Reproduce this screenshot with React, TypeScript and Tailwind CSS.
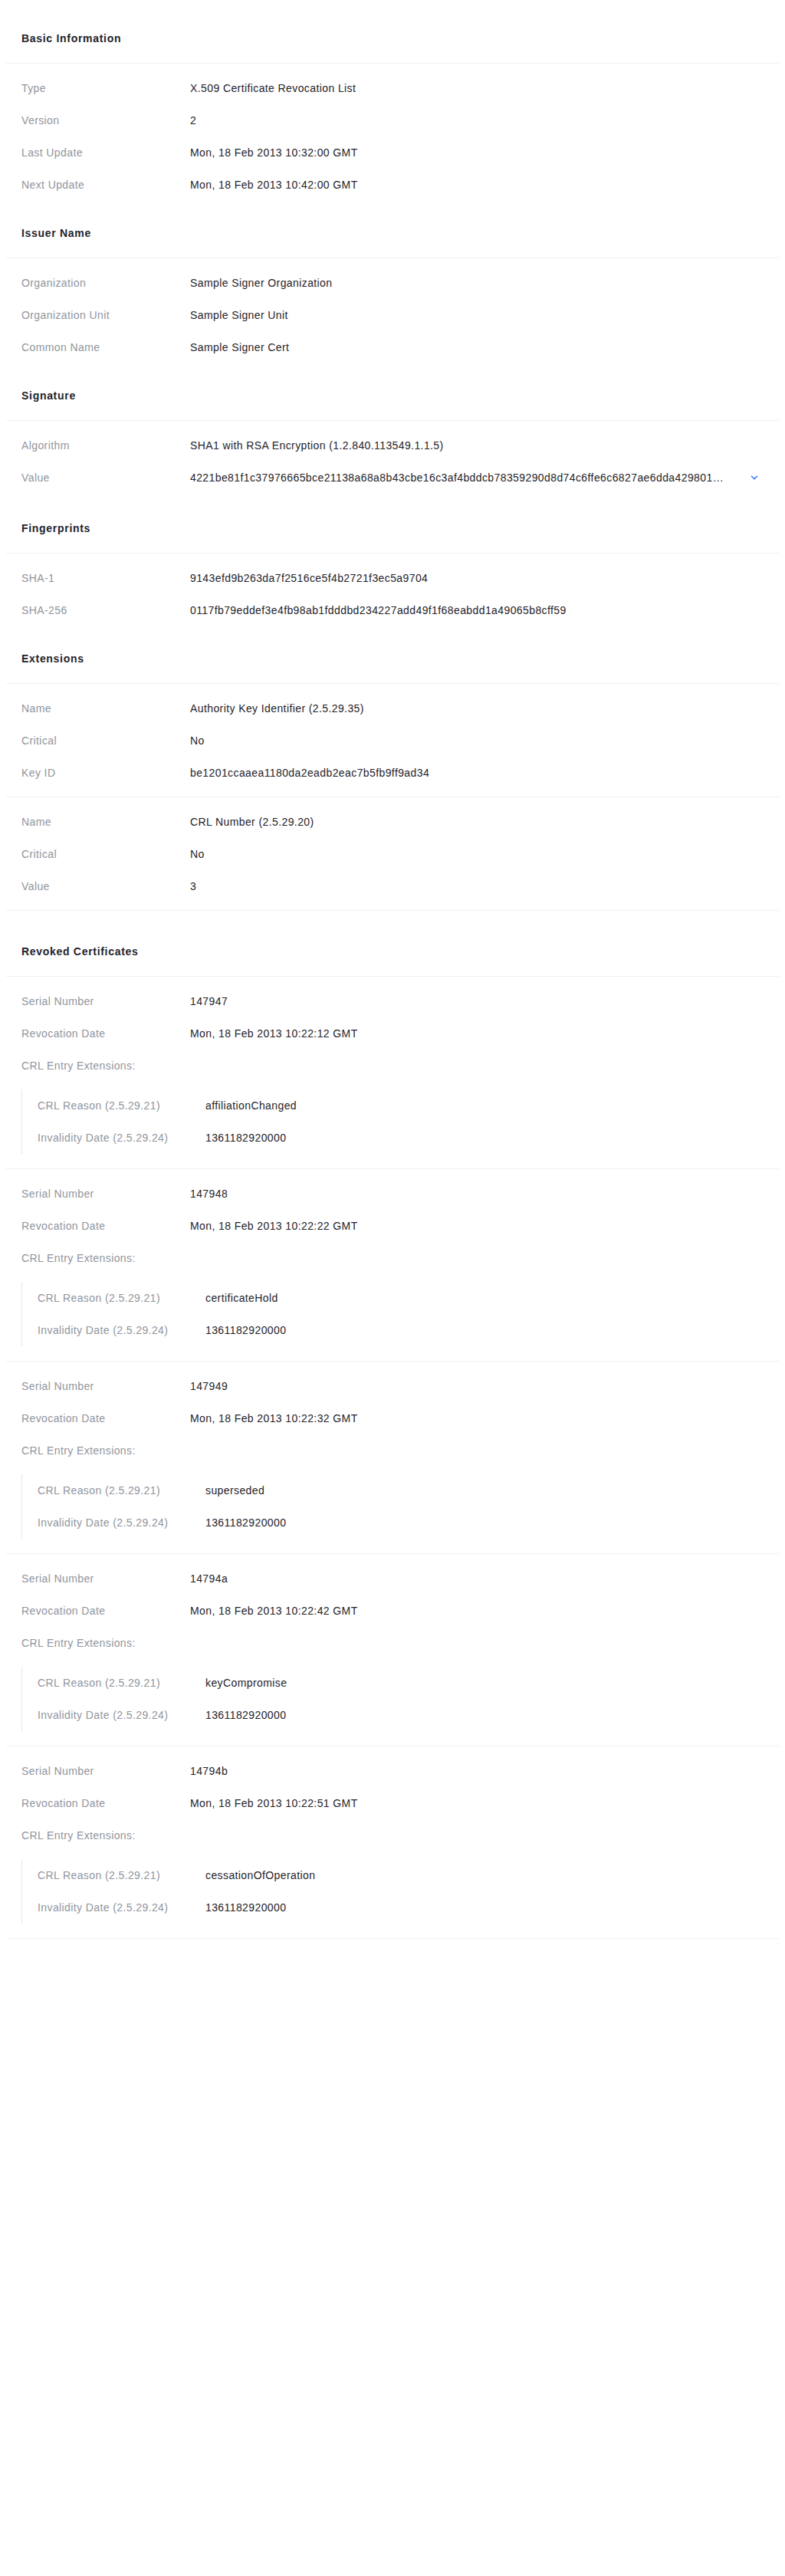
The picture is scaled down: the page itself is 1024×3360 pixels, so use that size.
import { ChevronDown } from "lucide-react";

type Pair = [string, string];

const font = { fontFamily: '"Liberation Sans", Arial, sans-serif' };

const basic: Pair[] = [
  ["Type", "X.509 Certificate Revocation List"],
  ["Version", "2"],
  ["Last Update", "Mon, 18 Feb 2013 10:32:00 GMT"],
  ["Next Update", "Mon, 18 Feb 2013 10:42:00 GMT"],
];

const issuer: Pair[] = [
  ["Organization", "Sample Signer Organization"],
  ["Organization Unit", "Sample Signer Unit"],
  ["Common Name", "Sample Signer Cert"],
];

const fingerprints: Pair[] = [
  ["SHA-1", "9143efd9b263da7f2516ce5f4b2721f3ec5a9704"],
  ["SHA-256", "0117fb79eddef3e4fb98ab1fdddbd234227add49f1f68eabdd1a49065b8cff59"],
];

const extensions: Pair[][] = [
  [
    ["Name", "Authority Key Identifier (2.5.29.35)"],
    ["Critical", "No"],
    ["Key ID", "be1201ccaaea1180da2eadb2eac7b5fb9ff9ad34"],
  ],
  [
    ["Name", "CRL Number (2.5.29.20)"],
    ["Critical", "No"],
    ["Value", "3"],
  ],
];

const revoked = [
  { serial: "147947", date: "Mon, 18 Feb 2013 10:22:12 GMT", reason: "affiliationChanged" },
  { serial: "147948", date: "Mon, 18 Feb 2013 10:22:22 GMT", reason: "certificateHold" },
  { serial: "147949", date: "Mon, 18 Feb 2013 10:22:32 GMT", reason: "superseded" },
  { serial: "14794a", date: "Mon, 18 Feb 2013 10:22:42 GMT", reason: "keyCompromise" },
  { serial: "14794b", date: "Mon, 18 Feb 2013 10:22:51 GMT", reason: "cessationOfOperation" },
];

const signatureValue =
  "4221be81f1c37976665bce21138a68a8b43cbe16c3af4bddcb78359290d8d74c6ffe6c6827ae6dda4298017a6f8d5b5c3b1c4d3e2f10a9b8c7d6e5f40312a1b0c9d8e7f6a5b4c3d2e1f0";

function Header({ title, top = "pt-8" }: { title: string; top?: string }) {
  return (
    <div className={`${top} pb-[22px] px-5 border-b border-[#eef0f3]`}>
      <h2 className="text-[14px] leading-5 font-bold text-[#1f2329] tracking-[0.7px]">{title}</h2>
    </div>
  );
}

function Row({ label, value, nested = false }: { label: string; value: string; nested?: boolean }) {
  return (
    <div className="flex h-[42px] items-center text-[14px] leading-5 tracking-[0.4px]">
      <div className={`${nested ? "w-[219px]" : "w-[220px]"} shrink-0 text-[#8f959e]`}>{label}</div>
      <div className="text-[#1f2329]">{value}</div>
    </div>
  );
}

function Rows({ items }: { items: Pair[] }) {
  return (
    <div className="px-5 pt-[11px]">
      {items.map(([l, v]) => (
        <Row key={l} label={l} value={v} />
      ))}
    </div>
  );
}

export default function App() {
  return (
    <div className="min-h-[3360px] bg-white px-2 pt-2" style={font}>
      <Header title="Basic Information" />
      <Rows items={basic} />

      <Header title="Issuer Name" />
      <Rows items={issuer} />

      <Header title="Signature" />
      <div className="px-5 pt-[11px]">
        <Row label="Algorithm" value="SHA1 with RSA Encryption (1.2.840.113549.1.1.5)" />
        <div className="flex h-[42px] mb-[3px] items-center text-[14px] leading-5 tracking-[0.4px]">
          <div className="w-[220px] shrink-0 text-[#8f959e]">Value</div>
          <div className="min-w-0 w-[702px] truncate text-[#1f2329]">{signatureValue}</div>
          <button className="ml-auto flex h-6 w-6 items-center justify-center text-[#3370ff]">
            <ChevronDown size={14} strokeWidth={2.5} />
          </button>
        </div>
      </div>

      <Header title="Fingerprints" />
      <Rows items={fingerprints} />

      <Header title="Extensions" />
      {extensions.map((group, i) => (
        <div key={i} className="px-5 pt-[11px] pb-[10px] border-b border-[#eef0f3]">
          {group.map(([l, v]) => (
            <Row key={l} label={l} value={v} />
          ))}
        </div>
      ))}

      <Header title="Revoked Certificates" top="pt-[43px]" />
      {revoked.map((r) => (
        <div key={r.serial} className="px-5 pt-[11px] pb-[19px] border-b border-[#eef0f3]">
          <Row label="Serial Number" value={r.serial} />
          <Row label="Revocation Date" value={r.date} />
          <div className="flex h-[42px] items-center text-[14px] leading-5 tracking-[0.4px] text-[#8f959e]">
            CRL Entry Extensions:
          </div>
          <div className="mt-[10px] border-l border-[#e4e6ea] pl-5">
            <Row nested label="CRL Reason (2.5.29.21)" value={r.reason} />
            <Row nested label="Invalidity Date (2.5.29.24)" value="1361182920000" />
          </div>
        </div>
      ))}
    </div>
  );
}
